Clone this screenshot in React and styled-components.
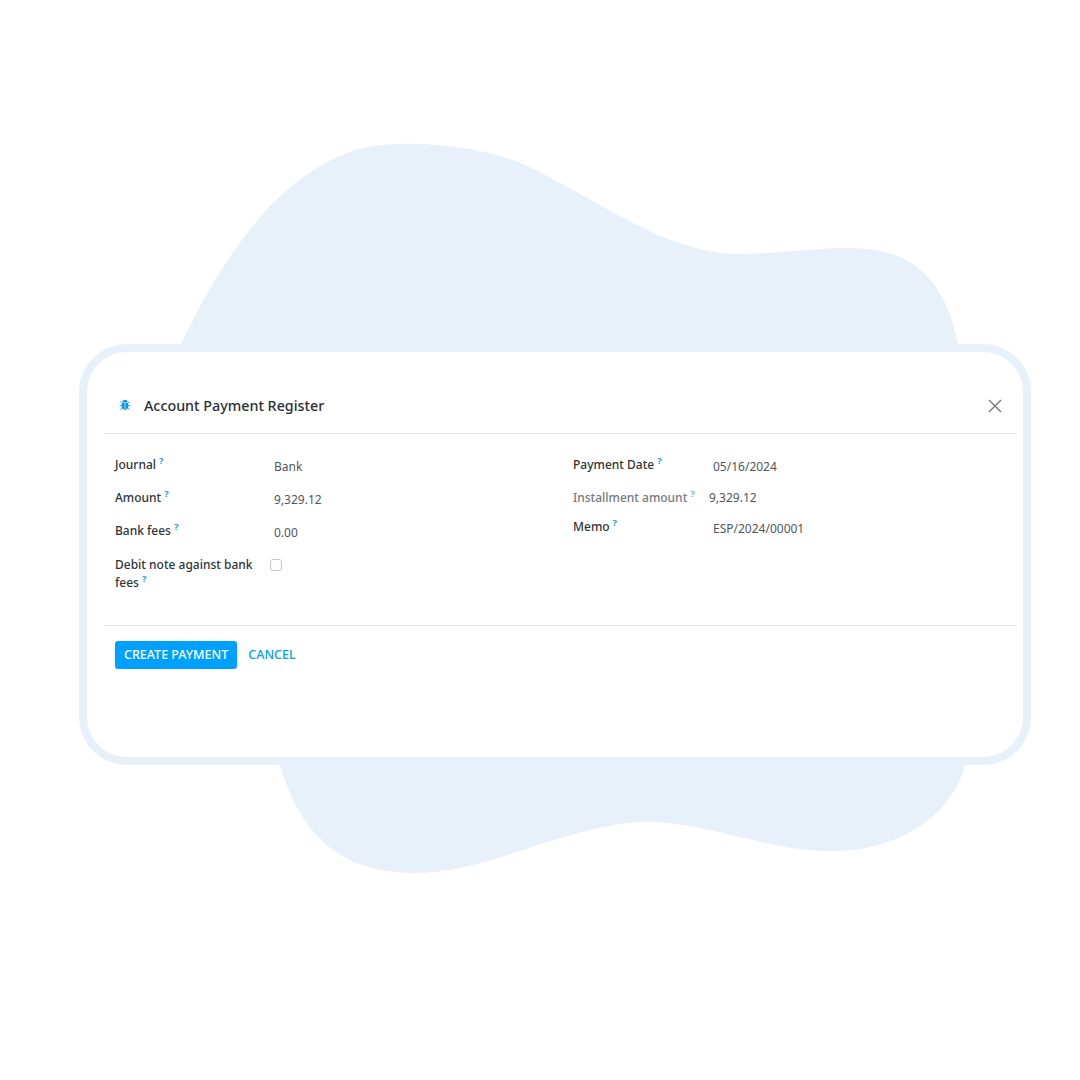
import React from "react";
import styled, { createGlobalStyle } from "styled-components";

const GlobalStyle = createGlobalStyle`
  html, body {
    margin: 0;
    padding: 0;
    background: #ffffff;
  }
  * {
    box-sizing: border-box;
  }
`;

const Page = styled.div`
  position: relative;
  width: 1080px;
  height: 1080px;
  padding: 344px 0 0 79px;
  overflow: hidden;
  font-family: "Noto Sans", "Open Sans", sans-serif;
`;

const Blob = styled.svg`
  position: absolute;
  left: 0;
  top: 0;
  width: 1080px;
  height: 1080px;
`;

const Card = styled.div`
  position: relative;
  display: flex;
  flex-direction: column;
  width: 952px;
  height: 421px;
  padding: 28px 6px 0 17px;
  background: #ffffff;
  border: 8px solid #e8f1fa;
  border-radius: 48px;
`;

const Header = styled.div`
  display: flex;
  align-items: center;
  justify-content: space-between;
  height: 54px;
  padding: 0 15px 4px 15px;
  border-bottom: 1px solid #e2e4e6;
`;

const TitleGroup = styled.div`
  display: flex;
  align-items: center;
  gap: 13px;
`;

const Title = styled.div`
  padding-top: 1px;
  font-size: 14.3px;
  font-weight: 500;
  color: #2b3035;
`;

const CloseButton = styled.button`
  display: flex;
  margin-top: 2px;
  padding: 0;
  border: 0;
  background: none;
  cursor: pointer;
`;

const Form = styled.div`
  display: grid;
  grid-template-columns: 458px 1fr;
  height: 192px;
  padding: 22px 0 0 11px;
  border-bottom: 1px solid #e2e4e6;
`;

const Column = styled.div`
  display: flex;
  flex-direction: column;
`;

const Row = styled.div`
  display: flex;
  align-items: flex-start;
  height: ${(p) => p.$height}px;
`;

const Label = styled.div`
  width: ${(p) => p.$width}px;
  flex: none;
  font-size: 12px;
  line-height: 18px;
  font-weight: 500;
  color: ${(p) => (p.$muted ? "#74797e" : "#2f3438")};
`;

const Help = styled.sup`
  margin-left: 3px;
  font-size: 9.5px;
  line-height: 0;
  font-weight: 700;
  color: #2a9fc4;
  opacity: ${(p) => (p.$muted ? 0.7 : 1)};
`;

const Value = styled.div`
  font-size: 12px;
  line-height: 18px;
  color: #50565c;
  padding-top: ${(p) => p.$top ?? 2}px;
`;

const CheckboxCell = styled.div`
  margin-left: 15px;
  padding-top: 3px;
`;

const Checkbox = styled.span`
  display: block;
  width: 12px;
  height: 12px;
  background: #ffffff;
  border: 1px solid #c2c6ca;
  border-radius: 3px;
`;

const Footer = styled.div`
  display: flex;
  align-items: center;
  gap: 11px;
  padding: 15px 0 0 11px;
`;

const PrimaryButton = styled.button`
  height: 28px;
  padding: 0 9px 1px;
  font-family: inherit;
  font-size: 12.5px;
  font-weight: 500;
  color: #ffffff;
  background: #00a0ff;
  border: 0;
  border-radius: 3px;
  cursor: pointer;
`;

const LinkButton = styled.button`
  padding: 0 0 1px;
  font-family: inherit;
  font-size: 12.5px;
  font-weight: 500;
  color: #00a0ff;
  background: none;
  border: 0;
  cursor: pointer;
`;

function BugIcon() {
  return (
    <svg width="12" height="12" viewBox="0 0 12 12" fill="none">
      <path
        d="M1.2 2.4l1.9 1.8M10.8 2.4L8.9 4.2M.6 6.6h2.4M11.4 6.6H9M1.2 10.6l2-1.8M10.8 10.6l-2-1.8"
        stroke="#35b6ff"
        strokeWidth="1"
      />
      <path d="M3.4 3.4a2.6 2.6 0 0 1 5.2 0z" fill="#0b96ee" />
      <path d="M2.7 4h3v7C3.9 10.9 2.7 9.4 2.7 7.6zM6.3 4h3v3.6c0 1.8-1.2 3.3-3 3.4z" fill="#0b96ee" />
    </svg>
  );
}

function CloseIcon() {
  return (
    <svg width="14" height="14" viewBox="0 0 14 14" fill="none">
      <path d="M1 1l12 12M13 1L1 13" stroke="#75797e" strokeWidth="1.4" />
    </svg>
  );
}

export default function App() {
  return (
    <Page>
      <GlobalStyle />
      <Blob viewBox="0 0 1080 1080">
        <path
          fill="#e8f1fa"
          d="M178 350C225 250 280 175 355 150C400 137 480 145 525 165C590 195 650 243 720 253C770 258 825 243 875 250C925 258 950 295 959 350L966 760C955 815 900 850 835 851C770 852 710 823 650 822C570 822 490 873 415 873C340 873 300 835 279 762Z"
        />
      </Blob>
      <Card>
        <Header>
          <TitleGroup>
            <BugIcon />
            <Title>Account Payment Register</Title>
          </TitleGroup>
          <CloseButton>
            <CloseIcon />
          </CloseButton>
        </Header>
        <Form>
          <Column>
            <Row $height={33}>
              <Label $width={159}>
                Journal<Help>?</Help>
              </Label>
              <Value>Bank</Value>
            </Row>
            <Row $height={33}>
              <Label $width={159}>
                Amount<Help>?</Help>
              </Label>
              <Value>9,329.12</Value>
            </Row>
            <Row $height={34}>
              <Label $width={159}>
                Bank fees<Help>?</Help>
              </Label>
              <Value>0.00</Value>
            </Row>
            <Row $height={40}>
              <Label $width={140}>
                Debit note against bank fees<Help>?</Help>
              </Label>
              <CheckboxCell>
                <Checkbox />
              </CheckboxCell>
            </Row>
          </Column>
          <Column>
            <Row $height={33}>
              <Label $width={140}>
                Payment Date<Help>?</Help>
              </Label>
              <Value>05/16/2024</Value>
            </Row>
            <Row $height={29}>
              <Label $width={136} $muted>
                Installment amount<Help $muted>?</Help>
              </Label>
              <Value $top={0}>9,329.12</Value>
            </Row>
            <Row $height={33}>
              <Label $width={140}>
                Memo<Help>?</Help>
              </Label>
              <Value>ESP/2024/00001</Value>
            </Row>
          </Column>
        </Form>
        <Footer>
          <PrimaryButton>CREATE PAYMENT</PrimaryButton>
          <LinkButton>CANCEL</LinkButton>
        </Footer>
      </Card>
    </Page>
  );
}
